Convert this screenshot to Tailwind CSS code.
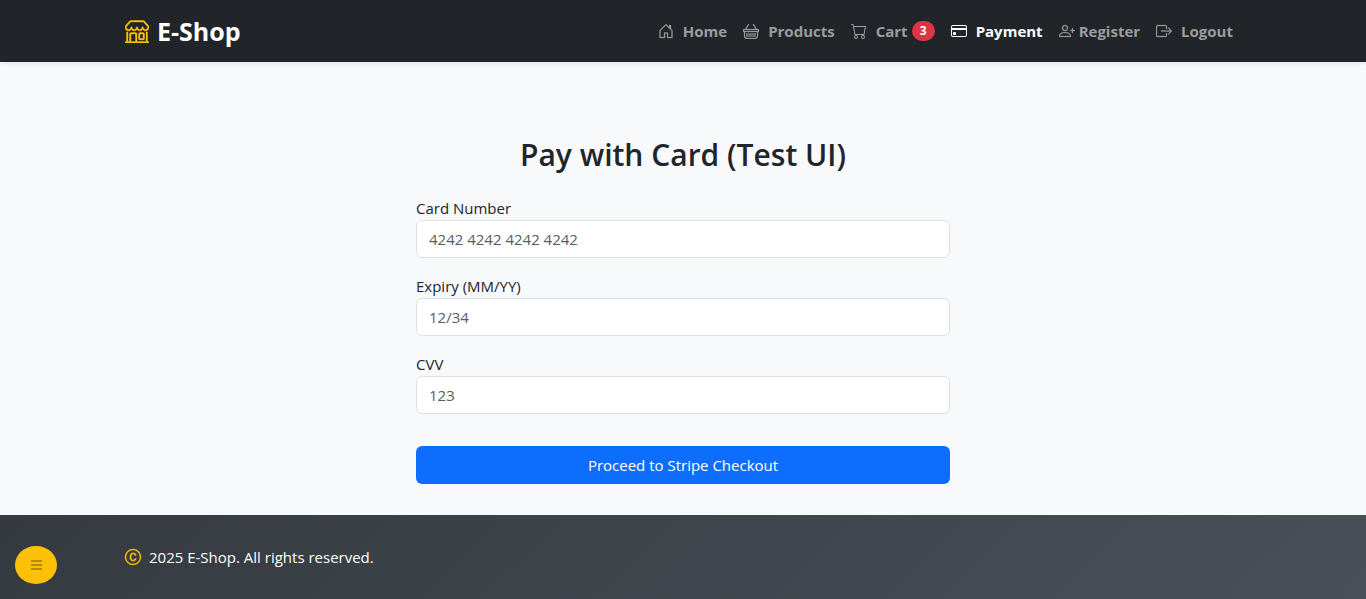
<!DOCTYPE html>
<html lang="en">
<head>
<meta charset="utf-8">
<meta name="viewport" content="width=device-width, initial-scale=1">
<title>E-Shop - Payment</title>
<script src="https://cdn.jsdelivr.net/npm/@tailwindcss/browser@4"></script>
</head>
<body class="flex min-h-screen flex-col bg-[#f8f9fb] font-['Open_Sans','Noto_Sans',sans-serif] text-[15px] leading-6 text-[#212529]">
<header class="bg-[#212529] shadow-[0_2px_4px_rgba(0,0,0,0.075)]">
  <nav class="mx-auto flex h-[62px] max-w-[1140px] items-center justify-between px-3">
    <a href="#" class="flex items-center gap-2 text-[25px] font-bold text-white">
      <svg class="size-6 text-[#ffc107]" viewBox="0 0 16 16" fill="currentColor" stroke="currentColor" stroke-width="0.25" aria-hidden="true"><path d="M2.97 1.35A1 1 0 0 1 3.73 1h8.54a1 1 0 0 1 .76.35l2.609 3.044A1.5 1.5 0 0 1 16 5.37v.255a2.375 2.375 0 0 1-4.25 1.458A2.37 2.37 0 0 1 9.875 8 2.37 2.37 0 0 1 8 7.083 2.37 2.37 0 0 1 6.125 8a2.37 2.37 0 0 1-1.875-.917A2.375 2.375 0 0 1 0 5.625V5.37a1.5 1.5 0 0 1 .361-.976zm1.78 4.275a1.375 1.375 0 0 0 2.75 0 .5.5 0 0 1 1 0 1.375 1.375 0 0 0 2.75 0 .5.5 0 0 1 1 0 1.375 1.375 0 1 0 2.75 0V5.37a.5.5 0 0 0-.12-.325L12.27 2H3.73L1.12 5.045A.5.5 0 0 0 1 5.37v.255a1.375 1.375 0 0 0 2.75 0 .5.5 0 0 1 1 0M1.5 8.5A.5.5 0 0 1 2 9v6h1v-5a1 1 0 0 1 1-1h3a1 1 0 0 1 1 1v5h6V9a.5.5 0 0 1 1 0v6h.5a.5.5 0 0 1 0 1H.5a.5.5 0 0 1 0-1H1V9a.5.5 0 0 1 .5-.5M4 15h3v-5H4zm5-5a1 1 0 0 1 1-1h2a1 1 0 0 1 1 1v3a1 1 0 0 1-1 1h-2a1 1 0 0 1-1-1zm3 0h-2v3h2z"/></svg>
      E-Shop
    </a>
    <ul class="flex items-center gap-4 pr-2 font-bold text-[#9b9d9f]">
      <li><a href="#" class="flex items-center gap-[9px]"><svg class="size-4" viewBox="0 0 16 16" fill="currentColor" stroke="currentColor" stroke-width="0.2" aria-hidden="true"><path d="M8.354 1.146a.5.5 0 0 0-.708 0l-6 6A.5.5 0 0 0 1.5 7.5v7a.5.5 0 0 0 .5.5h4.5a.5.5 0 0 0 .5-.5v-4h2v4a.5.5 0 0 0 .5.5H14a.5.5 0 0 0 .5-.5v-7a.5.5 0 0 0-.146-.354L13 5.793V2.5a.5.5 0 0 0-.5-.5h-1a.5.5 0 0 0-.5.5v1.293zM2.5 14V7.707l5.5-5.5 5.5 5.5V14H10v-4a.5.5 0 0 0-.5-.5h-3a.5.5 0 0 0-.5.5v4z"/></svg>Home</a></li>
      <li><a href="#" class="flex items-center gap-[9px]"><svg class="size-4" viewBox="0 0 16 16" fill="currentColor" stroke="currentColor" stroke-width="0.2" aria-hidden="true"><path d="M5.757 1.071a.5.5 0 0 1 .172.686L3.383 6h9.234L10.07 1.757a.5.5 0 1 1 .858-.514L13.783 6H15.5a.5.5 0 0 1 .5.5v2a.5.5 0 0 1-.5.5H15v4a3 3 0 0 1-3 3H4a3 3 0 0 1-3-3V9H.5a.5.5 0 0 1-.5-.5v-2A.5.5 0 0 1 .5 6h1.717L5.07 1.243a.5.5 0 0 1 .686-.172zM2 9v4a2 2 0 0 0 2 2h8a2 2 0 0 0 2-2V9zM1 7v1h14V7zm3 3a.5.5 0 0 1 .5.5v3a.5.5 0 0 1-1 0v-3A.5.5 0 0 1 4 10m2 0a.5.5 0 0 1 .5.5v3a.5.5 0 0 1-1 0v-3A.5.5 0 0 1 6 10m2 0a.5.5 0 0 1 .5.5v3a.5.5 0 0 1-1 0v-3A.5.5 0 0 1 8 10m2 0a.5.5 0 0 1 .5.5v3a.5.5 0 0 1-1 0v-3a.5.5 0 0 1 .5-.5m2 0a.5.5 0 0 1 .5.5v3a.5.5 0 0 1-1 0v-3a.5.5 0 0 1 .5-.5"/></svg>Products</a></li>
      <li><a href="#" class="flex items-center gap-[9px]"><svg class="size-4" viewBox="0 0 16 16" fill="currentColor" aria-hidden="true"><path d="M0 1.5A.5.5 0 0 1 .5 1H2a.5.5 0 0 1 .485.379L2.89 3H14.5a.5.5 0 0 1 .491.592l-1.5 8A.5.5 0 0 1 13 12H4a.5.5 0 0 1-.491-.408L2.01 3.607 1.61 2H.5a.5.5 0 0 1-.5-.5M3.102 4l1.313 7h8.17l1.313-7zM5 12a2 2 0 1 0 0 4 2 2 0 0 0 0-4m7 0a2 2 0 1 0 0 4 2 2 0 0 0 0-4m-7 1a1 1 0 1 1 0 2 1 1 0 0 1 0-2m7 0a1 1 0 1 1 0 2 1 1 0 0 1 0-2"/></svg><span class="flex items-center gap-1">Cart<span class="flex h-5 w-[23px] items-center justify-center rounded-full bg-[#dc3545] text-xs font-bold text-white">3</span></span></a></li>
      <li><a href="#" aria-current="page" class="flex items-center gap-[9px] text-white"><svg class="size-4" viewBox="0 0 16 16" fill="currentColor" aria-hidden="true"><path d="M0 4a2 2 0 0 1 2-2h12a2 2 0 0 1 2 2v8a2 2 0 0 1-2 2H2a2 2 0 0 1-2-2zm2-1a1 1 0 0 0-1 1v1h14V4a1 1 0 0 0-1-1zm13 4H1v5a1 1 0 0 0 1 1h12a1 1 0 0 0 1-1z"/><path d="M2 10a1 1 0 0 1 1-1h1a1 1 0 0 1 1 1v1a1 1 0 0 1-1 1H3a1 1 0 0 1-1-1z"/></svg>Payment</a></li>
      <li><a href="#" class="flex items-center gap-1"><svg class="size-4" viewBox="0 0 16 16" fill="currentColor" stroke="currentColor" stroke-width="0.2" aria-hidden="true"><path d="M6 8a3 3 0 1 0 0-6 3 3 0 0 0 0 6m2-3a2 2 0 1 1-4 0 2 2 0 0 1 4 0m4 8c0 1-1 1-1 1H1s-1 0-1-1 1-4 6-4 6 3 6 4m-1-.004c-.001-.246-.154-.986-.832-1.664C9.516 10.68 8.289 10 6 10s-3.516.68-4.168 1.332c-.678.678-.83 1.418-.832 1.664z"/><path d="M13.5 5a.5.5 0 0 1 .5.5V7h1.5a.5.5 0 0 1 0 1H14v1.5a.5.5 0 0 1-1 0V8h-1.5a.5.5 0 0 1 0-1H13V5.5a.5.5 0 0 1 .5-.5"/></svg>Register</a></li>
      <li><a href="#" class="flex items-center gap-[9px]"><svg class="size-4" viewBox="0 0 16 16" fill="currentColor" stroke="currentColor" stroke-width="0.2" aria-hidden="true"><path fill-rule="evenodd" d="M10 12.5a.5.5 0 0 1-.5.5h-8a.5.5 0 0 1-.5-.5v-9a.5.5 0 0 1 .5-.5h8a.5.5 0 0 1 .5.5v2a.5.5 0 0 0 1 0v-2A1.5 1.5 0 0 0 9.5 2h-8A1.5 1.5 0 0 0 0 3.5v9A1.5 1.5 0 0 0 1.5 14h8a1.5 1.5 0 0 0 1.5-1.5v-2a.5.5 0 0 0-1 0z"/><path fill-rule="evenodd" d="M15.854 8.354a.5.5 0 0 0 0-.708l-3-3a.5.5 0 0 0-.708.708L14.293 7.5H5.5a.5.5 0 0 0 0 1h8.793l-2.147 2.146a.5.5 0 0 0 .708.708z"/></svg>Logout</a></li>
    </ul>
  </nav>
</header>
<main class="flex-1 px-3 pt-[73px] pb-[31px]">
  <div class="mx-auto max-w-[534px]">
    <h1 class="mb-[22px] text-center text-[30px] leading-[39px] font-semibold">Pay with Card (Test UI)</h1>
    <form class="flex flex-col">
      <label for="card" class="h-6">Card Number</label>
      <input id="card" type="text" placeholder="4242 4242 4242 4242" class="mb-4 h-[38px] w-full rounded-md border border-[#dee2e6] bg-white px-3 placeholder:text-[#595c5f]">
      <label for="expiry" class="h-6">Expiry (MM/YY)</label>
      <input id="expiry" type="text" placeholder="12/34" class="mb-4 h-[38px] w-full rounded-md border border-[#dee2e6] bg-white px-3 placeholder:text-[#595c5f]">
      <label for="cvv" class="h-6">CVV</label>
      <input id="cvv" type="text" placeholder="123" class="mb-8 h-[38px] w-full rounded-md border border-[#dee2e6] bg-white px-3 placeholder:text-[#595c5f]">
      <button type="button" class="h-[38px] w-full rounded-md bg-[#0d6efd] text-white">Proceed to Stripe Checkout</button>
    </form>
  </div>
</main>
<footer class="bg-linear-135 from-[#343a40] to-[#495057] text-white">
  <div class="mx-auto flex h-[84px] max-w-[1140px] items-center gap-2 px-3">
    <svg class="size-4 overflow-visible text-[#ffc107]" viewBox="0 0 16 16" fill="currentColor" stroke="currentColor" stroke-width="0.4" aria-hidden="true"><path fill-rule="evenodd" d="M15 8A7 7 0 1 1 1 8a7 7 0 0 1 14 0m1 0A8 8 0 1 1 0 8a8 8 0 0 1 16 0M8.146 4.992c-1.212 0-1.927.92-1.927 2.502v1.06c0 1.571.703 2.462 1.927 2.462.979 0 1.641-.586 1.729-1.418h1.295v.093c-.1 1.448-1.354 2.467-3.03 2.467-2.091 0-3.269-1.336-3.269-3.603V7.482c0-2.261 1.201-3.638 3.27-3.638 1.681 0 2.935 1.054 3.029 2.572v.088H9.875c-.088-.879-.768-1.512-1.729-1.512"/></svg>
    <p>2025 E-Shop. All rights reserved.</p>
  </div>
</footer>
<button type="button" aria-label="Open menu" class="fixed bottom-[15px] left-[15px] flex h-[38px] w-[42px] items-center justify-center rounded-[50%] bg-[#ffc107] text-[#b58b0f]">
  <svg class="size-4" viewBox="0 0 16 16" fill="currentColor" aria-hidden="true"><path d="M3 3h11v2H3zM3 7h11v2H3zM3 11h11v2H3z"/></svg>
</button>
</body>
</html>
